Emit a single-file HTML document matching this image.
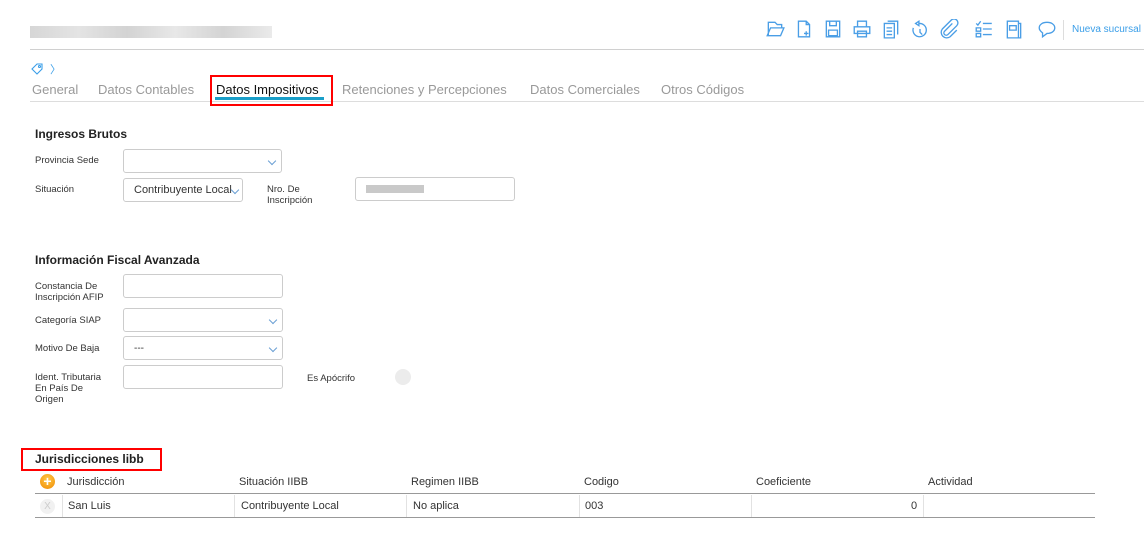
<!DOCTYPE html>
<html><head><meta charset="utf-8"><style>
*{margin:0;padding:0;box-sizing:border-box}
body{width:1144px;height:552px;background:#fff;position:relative;font-family:"Liberation Sans",sans-serif;overflow:hidden;color:#333}
.a{position:absolute}
.lbl{position:absolute;font-size:9.5px;color:#333;line-height:11px}
.box{position:absolute;border:1px solid #ccc;border-radius:3px;background:#fff}
.chev{position:absolute;right:6px;top:8px;width:6px;height:6px;border-right:1px solid #6a9fd4;border-bottom:1px solid #6a9fd4;transform:rotate(45deg)}
.tab{position:absolute;top:82px;font-size:13px;color:#999;white-space:nowrap}
.h{position:absolute;font-size:12px;font-weight:bold;color:#222}
.th{position:absolute;top:476px;font-size:11px;color:#333}
.td{position:absolute;top:500px;font-size:11px;color:#333}
.vd{position:absolute;top:495px;width:1px;height:22px;background:#e2e2e2}
svg.i{position:absolute;top:19px;width:20px;height:20px;fill:none;stroke:#4a9ee6;stroke-width:1.2}
</style></head><body>
<div class="a" style="left:30px;top:26px;width:242px;height:12px;background:linear-gradient(90deg,#ccc,#ddd 20%,#c8c8c8 40%,#e2e2e2 60%,#c9c9c9 80%,#e5e5e5);opacity:.8"></div>
<div class="a" style="left:30px;top:49px;width:1114px;height:1px;background:#d0d0d0"></div>

<svg class="i" style="left:765px" viewBox="0 0 18 18"><path d="M3 15V3h6l2 2h4v3M2 15l3-7h12l-3 7z"/></svg>
<svg class="i" style="left:794px" viewBox="0 0 18 18"><path d="M4 2h7l3 3v11H4zM11 2v3h3M11 11v4M9 13h4"/></svg>
<svg class="i" style="left:823px" viewBox="0 0 18 18"><path d="M3 2h12v14H3zM6 2v4h6V2M5 10h8v5H5z"/></svg>
<svg class="i" style="left:852px" viewBox="0 0 18 18"><path d="M5 7V2h8v5M2 7h14v6H2zM5 11h8v5H5z"/></svg>
<svg class="i" style="left:881px" viewBox="0 0 18 18"><path d="M6 2h9v12M3 4h9v13H3zM5 8h5M5 11h5M5 14h5"/></svg>
<svg class="i" style="left:910px" viewBox="0 0 18 18"><path d="M8 4a6 6 0 1 1-5 4M8 2v4l-3-2zM9 9v3l2 2"/></svg>
<svg class="i" style="left:939px" viewBox="0 0 18 18"><path d="M12 4l-7 7a2 2 0 0 0 3 3l8-8a3.5 3.5 0 0 0-5-5l-8 8a5 5 0 0 0 7 7l6-6"/></svg>
<svg class="i" style="left:974px" viewBox="0 0 18 18"><path d="M2 4l1.5 1.5L6 2M2 8h4v3H2zM2 13h4v3H2zM8 4h8M8 9h8M8 14h8"/></svg>
<svg class="i" style="left:1004px" viewBox="0 0 18 18"><path d="M3 2h10v15H3zM13 4h2v13H5M5 6h6v4H5z"/></svg>
<svg class="i" style="left:1037px" viewBox="0 0 18 18"><path d="M9 3c4 0 7 2 7 5s-3 5-7 5l-4 3v-3.5C3 11 2 9.5 2 8c0-3 3-5 7-5z"/></svg>
<div class="a" style="left:1063px;top:20px;width:1px;height:20px;background:#ddd"></div>
<div class="a" style="left:1072px;top:24px;font-size:10px;color:#3a9ee8;white-space:nowrap">Nueva sucursal</div>

<svg class="a" style="left:31px;top:63px" width="14" height="12" viewBox="0 0 14 12" fill="none" stroke="#3a9ee8" stroke-width="1.1"><path d="M1 6l5-5h5v5l-5 5z"/><circle cx="8.5" cy="3.5" r="1"/></svg>
<div class="a" style="left:50px;top:61px;font-size:11px;color:#3a9ee8">〉</div>

<div class="tab" style="left:32px">General</div>
<div class="tab" style="left:98px">Datos Contables</div>
<div class="tab" style="left:216px;color:#111">Datos Impositivos</div>
<div class="tab" style="left:342px">Retenciones y Percepciones</div>
<div class="tab" style="left:530px">Datos Comerciales</div>
<div class="tab" style="left:661px">Otros Códigos</div>
<div class="a" style="left:30px;top:101px;width:1114px;height:1px;background:#ddd"></div>
<div class="a" style="left:215px;top:97px;width:109px;height:3px;background:#1a9fc9"></div>
<div class="a" style="left:210px;top:75px;width:123px;height:31px;border:2px solid #f00"></div>

<div class="h" style="left:35px;top:127px">Ingresos Brutos</div>
<div class="lbl" style="left:35px;top:155px">Provincia Sede</div>
<div class="box" style="left:123px;top:149px;width:159px;height:24px"><div class="chev"></div></div>
<div class="lbl" style="left:35px;top:184px">Situación</div>
<div class="box" style="left:123px;top:178px;width:120px;height:24px"><div class="a" style="left:10px;top:5px;font-size:11px;color:#333">Contribuyente Local</div><div class="chev" style="right:4px"></div></div>
<div class="lbl" style="left:267px;top:184px">Nro. De<br>Inscripción</div>
<div class="box" style="left:355px;top:177px;width:160px;height:24px"><div class="a" style="left:10px;top:7px;width:58px;height:8px;background:#c9c9c9"></div></div>

<div class="h" style="left:35px;top:253px">Información Fiscal Avanzada</div>
<div class="lbl" style="left:35px;top:281px">Constancia De<br>Inscripción AFIP</div>
<div class="box" style="left:123px;top:274px;width:160px;height:24px"></div>
<div class="lbl" style="left:35px;top:315px">Categoría SIAP</div>
<div class="box" style="left:123px;top:308px;width:160px;height:24px"><div class="chev"></div></div>
<div class="lbl" style="left:35px;top:343px">Motivo De Baja</div>
<div class="box" style="left:123px;top:336px;width:160px;height:24px"><div class="a" style="left:10px;top:6px;font-size:10px">---</div><div class="chev"></div></div>
<div class="lbl" style="left:35px;top:372px">Ident. Tributaria<br>En País De<br>Origen</div>
<div class="box" style="left:123px;top:365px;width:160px;height:24px"></div>
<div class="lbl" style="left:307px;top:373px">Es Apócrifo</div>
<div class="a" style="left:395px;top:369px;width:16px;height:16px;border-radius:50%;background:#ececec"></div>

<div class="a" style="left:21px;top:448px;width:141px;height:23px;border:2px solid #f00"></div>
<div class="h" style="left:35px;top:452px">Jurisdicciones libb</div>
<div class="a" style="left:40px;top:474px;width:15px;height:15px;border-radius:50%;background:radial-gradient(circle at 50% 35%,#ffc94a,#f08a00);color:#fff;font-size:14px;line-height:14px;text-align:center;font-weight:bold">+</div>
<div class="th" style="left:67px">Jurisdicción</div>
<div class="th" style="left:239px">Situación IIBB</div>
<div class="th" style="left:411px">Regimen IIBB</div>
<div class="th" style="left:584px">Codigo</div>
<div class="th" style="left:756px">Coeficiente</div>
<div class="th" style="left:928px">Actividad</div>
<div class="a" style="left:35px;top:493px;width:1060px;height:1px;background:#999"></div>
<div class="a" style="left:40px;top:499px;width:15px;height:15px;border-radius:50%;background:#f1f1f1;color:#ccc;font-size:10px;line-height:15px;text-align:center">X</div>
<div class="vd" style="left:62px"></div><div class="vd" style="left:234px"></div><div class="vd" style="left:406px"></div><div class="vd" style="left:579px"></div><div class="vd" style="left:751px"></div><div class="vd" style="left:923px"></div>
<div class="td" style="left:68px">San Luis</div>
<div class="td" style="left:241px">Contribuyente Local</div>
<div class="td" style="left:413px">No aplica</div>
<div class="td" style="left:585px">003</div>
<div class="td" style="left:911px">0</div>
<div class="a" style="left:35px;top:517px;width:1060px;height:1px;background:#999"></div>
</body></html>
